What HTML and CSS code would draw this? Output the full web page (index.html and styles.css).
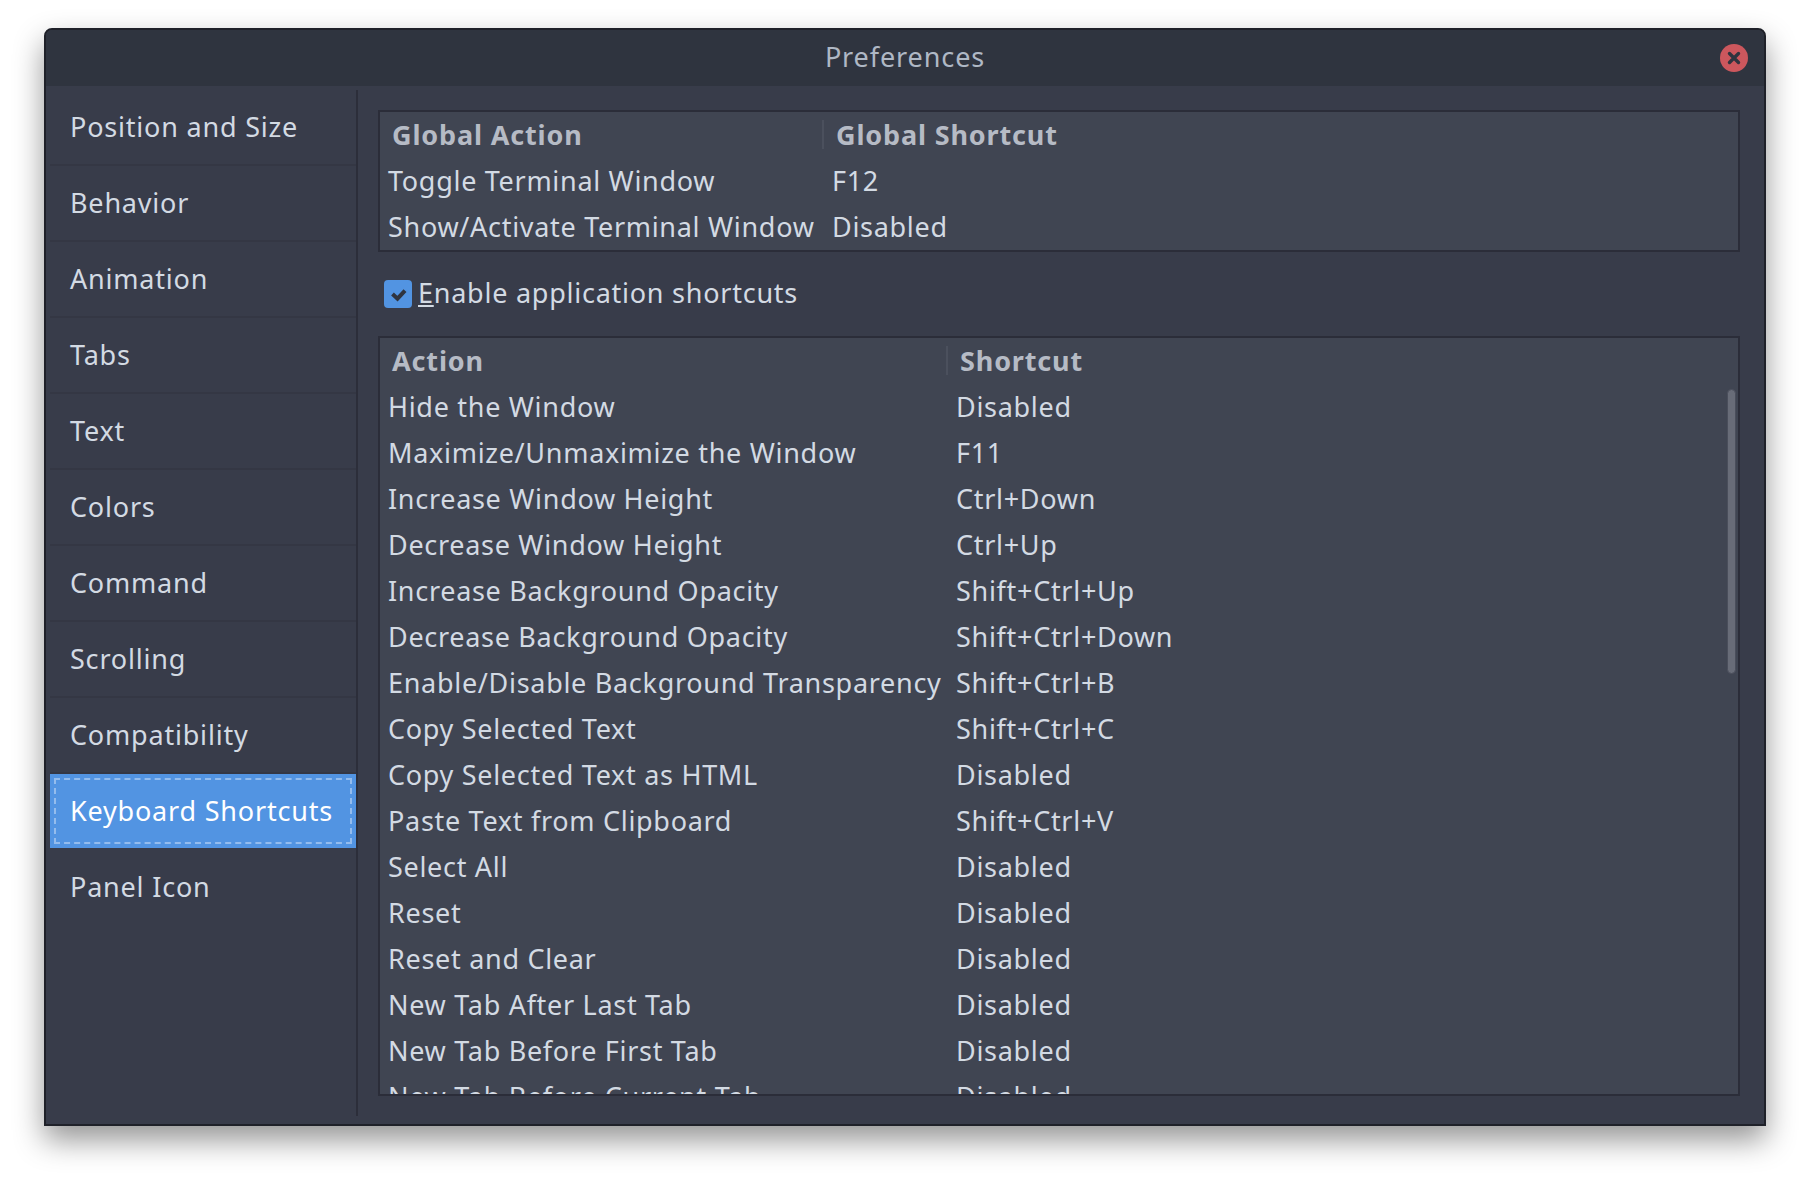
FILE: index.html
```html
<!DOCTYPE html>
<html>
	<head>
		<meta charset="UTF-8">
		<title>Preferences</title>
		<link rel="stylesheet" href="styles.css">
	</head>
	<body>
		<div class="window">
			<div class="titlebar">
				<span></span>
				<span class="title">Preferences</span>
				<span class="close">
					<svg width="28" height="28" viewBox="0 0 28 28"><circle cx="14" cy="14" r="14" fill="#cc575d"/><path d="M9.5 9.5l9 9M18.5 9.5l-9 9" stroke="#2f343f" stroke-width="3.4" stroke-linecap="round" fill="none"/></svg>
				</span>
			</div>
			<div class="content">
				<ul class="sidebar">
					<li>Position and Size</li>
					<li>Behavior</li>
					<li>Animation</li>
					<li>Tabs</li>
					<li>Text</li>
					<li>Colors</li>
					<li>Command</li>
					<li>Scrolling</li>
					<li>Compatibility</li>
					<li class="selected">Keyboard Shortcuts</li>
					<li class="last">Panel Icon</li>
				</ul>
				<div class="panel">
					<div class="table table-global">
						<div class="row head"><span>Global Action</span><span>Global Shortcut</span></div>
						<div class="row"><span>Toggle Terminal Window</span><span>F12</span></div>
						<div class="row"><span>Show/Activate Terminal Window</span><span>Disabled</span></div>
					</div>
					<label class="check">
						<span class="box">
							<svg width="28" height="28" viewBox="0 0 28 28"><path d="M8.5 14l5 4.6 7.5-8" stroke="#2f343f" stroke-width="4" fill="none"/></svg>
						</span>
						<span class="check-label"><u>E</u>nable application shortcuts</span>
					</label>
					<div class="table table-app">
						<div class="row head"><span>Action</span><span>Shortcut</span></div>
						<div class="row"><span>Hide the Window</span><span>Disabled</span></div>
						<div class="row"><span>Maximize/Unmaximize the Window</span><span>F11</span></div>
						<div class="row"><span>Increase Window Height</span><span>Ctrl+Down</span></div>
						<div class="row"><span>Decrease Window Height</span><span>Ctrl+Up</span></div>
						<div class="row"><span>Increase Background Opacity</span><span>Shift+Ctrl+Up</span></div>
						<div class="row"><span>Decrease Background Opacity</span><span>Shift+Ctrl+Down</span></div>
						<div class="row"><span>Enable/Disable Background Transparency</span><span>Shift+Ctrl+B</span></div>
						<div class="row"><span>Copy Selected Text</span><span>Shift+Ctrl+C</span></div>
						<div class="row"><span>Copy Selected Text as HTML</span><span>Disabled</span></div>
						<div class="row"><span>Paste Text from Clipboard</span><span>Shift+Ctrl+V</span></div>
						<div class="row"><span>Select All</span><span>Disabled</span></div>
						<div class="row"><span>Reset</span><span>Disabled</span></div>
						<div class="row"><span>Reset and Clear</span><span>Disabled</span></div>
						<div class="row"><span>New Tab After Last Tab</span><span>Disabled</span></div>
						<div class="row"><span>New Tab Before First Tab</span><span>Disabled</span></div>
						<div class="row"><span>New Tab Before Current Tab</span><span>Disabled</span></div>
						<div class="scrollbar"></div>
					</div>
				</div>
			</div>
		</div>
	</body>
</html>
```

FILE: styles.css
```css
* {
	margin: 0;
	padding: 0;
	box-sizing: border-box;
}

body {
	width: 1810px;
	height: 1186px;
	padding: 28px 44px 60px;
	background: #ffffff;
	font-family: "Noto Sans", sans-serif;
	font-size: 27px;
	letter-spacing: 0.7px;
	color: #d3dae3;
	overflow: hidden;
}

.window {
	height: 1098px;
	display: flex;
	flex-direction: column;
	background: #383c4a;
	border: 2px solid #1f2129;
	border-radius: 8px 8px 0 0;
	box-shadow: 0 14px 30px rgba(0, 0, 0, 0.42);
}

.titlebar {
	height: 56px;
	flex: none;
	display: grid;
	grid-template-columns: 1fr auto 1fr;
	align-items: center;
	background: #2f343f;
	border-radius: 6px 6px 0 0;
}

.title {
	padding-bottom: 4px;
	letter-spacing: 0.9px;
	color: #afb8c5;
}

.close {
	justify-self: end;
	width: 28px;
	height: 28px;
	margin-right: 16px;
	margin-bottom: 2px;
}

.content {
	flex: 1;
	display: flex;
	min-height: 0;
}

.sidebar {
	width: 312px;
	flex: none;
	margin: 4px 0 8px;
	padding-left: 4px;
	list-style: none;
	border-right: 2px solid #2c2e3a;
	letter-spacing: 0.8px;
}

.sidebar li {
	height: 76px;
	padding: 0 0 2px 20px;
	display: flex;
	align-items: center;
	border-bottom: 2px solid #343744;
}

.sidebar li.last {
	border-bottom-color: transparent;
}

.sidebar li.selected {
	height: 74px;
	margin-bottom: 2px;
	border-bottom: none;
	background: #5294e2;
	color: #ffffff;
	outline: 2px dashed rgba(255, 255, 255, 0.38);
	outline-offset: -6px;
}

.panel {
	flex: 1;
	min-width: 0;
	padding: 24px 24px 28px 20px;
	display: flex;
	flex-direction: column;
}

.table {
	position: relative;
	background: #404552;
	border: 2px solid #2b2d39;
	overflow: hidden;
}

.table-global {
	height: 142px;
	flex: none;
}

.table-app {
	flex: 1;
	min-height: 0;
}

.row {
	height: 46px;
	display: grid;
	align-items: center;
	padding: 0 0 2px 8px;
	white-space: nowrap;
}

.table-global .row {
	grid-template-columns: 434px 1fr;
}

.table-app .row {
	grid-template-columns: 558px 1fr;
}

.row span:nth-child(2) {
	padding-left: 10px;
}

.head {
	letter-spacing: 0.85px;
	font-weight: 700;
	color: #b6bbc5;
}

.head span:first-child {
	padding-left: 4px;
}

.head span:nth-child(2) {
	position: relative;
	padding-left: 14px;
}

.head span:nth-child(2)::before {
	content: "";
	position: absolute;
	left: 0;
	top: 4px;
	bottom: 4px;
	width: 2px;
	background: #4b505d;
}

.check {
	height: 28px;
	flex: none;
	margin: 28px 0 28px 6px;
	display: flex;
	align-items: center;
	gap: 6px;
}

.check-label {
	padding-bottom: 4px;
	letter-spacing: 0.75px;
}

.box {
	width: 28px;
	height: 28px;
	background: #5294e2;
	border-radius: 4px;
}

.box svg {
	display: block;
}

.scrollbar {
	position: absolute;
	right: 2px;
	top: 51px;
	width: 9px;
	height: 285px;
	background: #686c78;
	border: 1px solid #4a4e5b;
	border-radius: 5px;
}
```
